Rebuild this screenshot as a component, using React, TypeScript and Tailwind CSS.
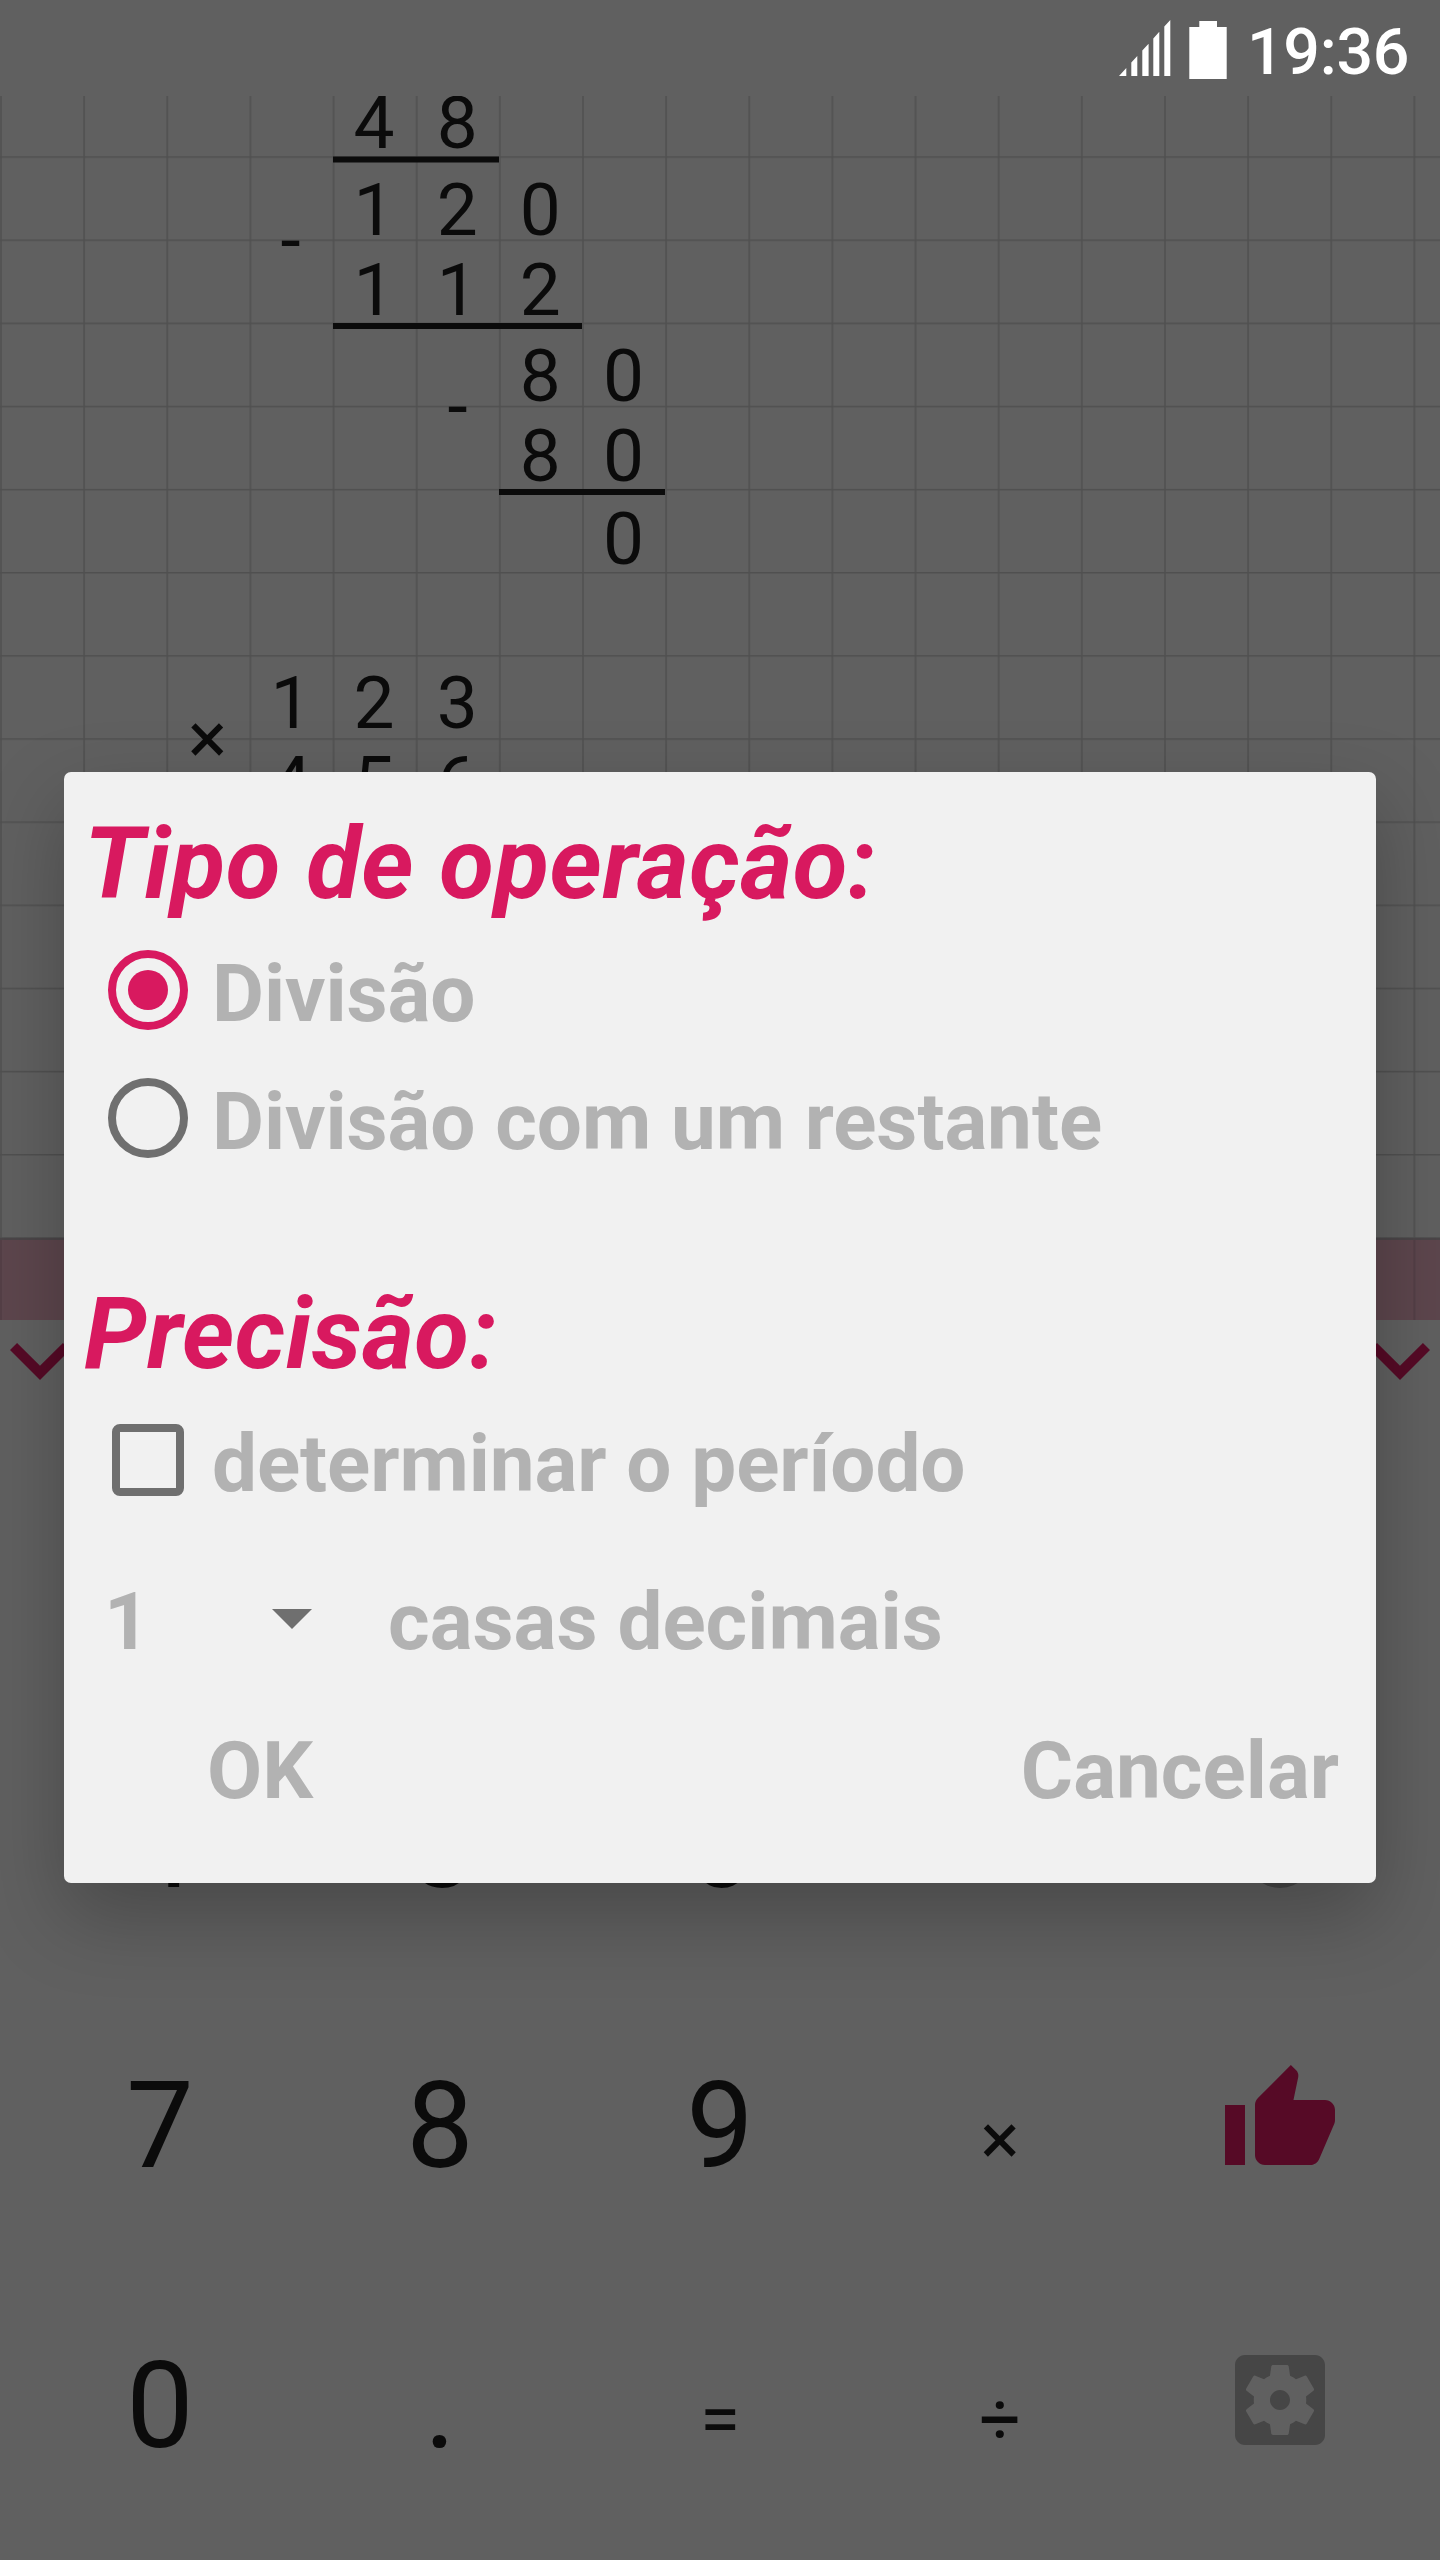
import React from 'react';

// Worksheet cells are 83.14px squares, the first row is cut off by the status bar
type Row = {
  /** Height of the row and its distance from the row above */
  className: string;
  /** One entry per grid column, starting at the left edge */
  cells: string[];
};

const rows: Row[] = [
  { className: 'h-[80px]', cells: ['', '', '', '', '4', '8'] },
  { className: 'mt-[7px] h-[80px]', cells: ['', '', '', '', '1', '2', '0'] },
  { className: 'h-[80px]', cells: ['', '', '', '', '1', '1', '2'] },
  { className: 'mt-[6px] h-[80px]', cells: ['', '', '', '', '', '', '8', '0'] },
  { className: 'h-[80px]', cells: ['', '', '', '', '', '', '8', '0'] },
  { className: 'mt-[3px] h-[80px]', cells: ['', '', '', '', '', '', '', '0'] },
  { className: 'mt-[84px] h-[80px]', cells: ['', '', '', '1', '2', '3'] },
  { className: 'h-[80px]', cells: ['', '', '', '4', '5', '6'] },
];

const keys = [
  ['4', '5', '6', '-', 'back'],
  ['7', '8', '9', '×', 'like'],
  ['0', '.', '=', '÷', 'settings'],
];

/** Status bar with signal, battery and clock */
const StatusBar = () => (
  <header className="flex h-24 shrink-0 items-center justify-end pr-[34px] pt-[4px] text-white">
    <svg className="-mt-[4px] mr-[18px] h-[56px] w-[52px]" viewBox="0 0 52 56" fill="currentColor" aria-hidden="true">
      <path d="M0 56 7.3 48V56zM12.3 56V42.5L18.3 36V56zM23.3 56V30.5L29.6 23.7V56zM34.3 56V18.4L40.3 11.8V56zM45.3 56V6.4L51.3 0V56z" />
    </svg>
    <svg className="mr-[20px] h-[58px] w-[38px]" viewBox="0 0 38 58" fill="currentColor" aria-hidden="true">
      <path d="M.3 6h10V0h17.7v6h9.7v52H.3z" />
    </svg>
    <span className="mt-[5px] w-[159px] text-[64.5px] font-medium leading-none tracking-[-0.3px]">19:36</span>
  </header>
);

/** Squared paper with the written calculation */
const Worksheet = () => (
  <section className="relative h-[1142px] shrink-0 overflow-hidden">
    <svg className="absolute inset-0 h-full w-full" aria-hidden="true">
      <defs>
        <pattern id="grid" width="83.14" height="83.14" y="60.3" patternUnits="userSpaceOnUse">
          <path d="M0 .8H83.14M1 0V83.14" stroke="#505050" strokeWidth="1.6" fill="none" />
        </pattern>
      </defs>
      <rect width="1440" height="1144" fill="url(#grid)" />
      <path d="M333 63.5h166M333 230h249M499 396h166" stroke="#0b0b0b" strokeWidth="6" />
    </svg>

    <div className="relative -mt-[13px]">
      {rows.map((row, i) => (
        <div key={i} className={`flex ${row.className}`}>
          {row.cells.map((cell, j) => (
            <span key={j} className="w-[83.14px] shrink-0 text-center text-[73px] leading-[80px]">
              {cell}
            </span>
          ))}
        </div>
      ))}
    </div>

    {/* Operators sit between two rows of digits */}
    <span className="absolute left-[249px] top-[104px] w-[83px] text-center text-[73px] leading-[80px]">-</span>
    <span className="absolute left-[416px] top-[270px] w-[83px] text-center text-[73px] leading-[80px]">-</span>
    <span className="absolute left-[166px] top-[602px] w-[83px] text-center text-[73px] leading-[80px]">×</span>
  </section>
);

/** Current input line, the paper grid shines through */
const InputLine = () => (
  <div className="h-[82px] shrink-0 border-t-2 border-[#4b4548] bg-[#5d464d]">
    <svg className="h-full w-full" aria-hidden="true">
      <path d="M1 0v82M1414.4 0v82" stroke="#543f46" strokeWidth="2" />
    </svg>
  </div>
);

const Chevron = () => (
  <svg className="h-[120px] w-[120px] text-[#560a26]" viewBox="0 0 24 24" fill="currentColor" aria-hidden="true">
    <path d="M16.59 8.59 12 13.17 7.41 8.59 6 10l6 6 6-6z" />
  </svg>
);

const KeyIcon = ({ name }: { name: string }) => {
  if (name === 'back') {
    return (
      <svg className="h-[120px] w-[120px] text-[#464646]" viewBox="0 0 24 24" fill="currentColor" aria-hidden="true">
        <circle cx="12" cy="14.6" r="7" />
      </svg>
    );
  }
  if (name === 'like') {
    return (
      <svg className="h-[120px] w-[120px] text-[#560a26]" viewBox="0 0 24 24" fill="currentColor" aria-hidden="true">
        <path d="M1 21h4V9H1v12zm22-11c0-1.1-.9-2-2-2h-6.31l.95-4.57.03-.32c0-.41-.17-.79-.44-1.06L14.17 1 7.59 7.59C7.22 7.95 7 8.45 7 9v10c0 1.1.9 2 2 2h9c.83 0 1.54-.5 1.84-1.22l3.02-7.05c.09-.23.14-.47.14-.73v-2z" />
      </svg>
    );
  }
  return (
    <svg className="h-[120px] w-[120px] text-[#464646]" viewBox="0 0 24 24" fill="currentColor" aria-hidden="true">
      <path d="M12 10c-1.1 0-2 .9-2 2s.9 2 2 2 2-.9 2-2-.9-2-2-2zm7-7H5c-1.11 0-2 .9-2 2v14c0 1.1.89 2 2 2h14c1.11 0 2-.9 2-2V5c0-1.1-.89-2-2-2zm-1.75 9c0 .23-.02.46-.05.68l1.48 1.16c.13.11.17.3.08.45l-1.4 2.42c-.09.15-.27.21-.43.15l-1.74-.7c-.36.28-.76.51-1.18.69l-.26 1.85c-.03.17-.18.3-.35.3h-2.8c-.17 0-.32-.13-.35-.29l-.26-1.85c-.43-.18-.82-.41-1.18-.69l-1.74.7c-.16.06-.34 0-.43-.15l-1.4-2.42c-.09-.15-.05-.34.08-.45l1.48-1.16c-.03-.23-.05-.46-.05-.69 0-.23.02-.46.05-.68l-1.48-1.16c-.13-.11-.17-.3-.08-.45l1.4-2.42c.09-.15.27-.21.43-.15l1.74.7c.36-.28.76-.51 1.18-.69l.26-1.85c.03-.17.18-.3.35-.3h2.8c.17 0 .32.13.35.29l.26 1.85c.43.18.82.41 1.18.69l1.74-.7c.16-.06.34 0 .43.15l1.4 2.42c.09.15.05.34-.08.45l-1.48 1.16c.03.23.05.46.05.69z" />
    </svg>
  );
};

/** Calculator keys, three digit columns, operators and actions */
const Keypad = () => (
  <section className="mt-[280px] grid grid-cols-5 px-[20px]">
    {keys.flat().map((key) => (
      <div key={key} className="flex h-[280px] items-center justify-center">
        {key.length > 1 ? (
          <KeyIcon name={key} />
        ) : (
          <span
            className={
              /[0-9.]/.test(key)
                ? 'mt-[12px] text-[120px] leading-none'
                : 'mt-[38px] text-[73px] leading-none'
            }
          >
            {key}
          </span>
        )}
      </div>
    ))}
  </section>
);

const Radio = ({ checked, label }: { checked?: boolean; label: string }) => (
  <label className="ml-[44px] flex h-[128px] items-center">
    <span
      className={`flex h-[80px] w-[80px] shrink-0 items-center justify-center rounded-full border-8 ${
        checked ? 'border-[#d8195f]' : 'border-[#6f6f6f]'
      }`}
    >
      {checked && <span className="h-[40px] w-[40px] rounded-full bg-[#d8195f]" />}
    </span>
    <span className="ml-[24px] mt-[7px] leading-none tracking-[-0.07px]">{label}</span>
  </label>
);

/** Options for the division */
const OperationDialog = () => (
  <div
    role="dialog"
    className="absolute left-[64px] top-[772px] flex h-[1111px] w-[1312px] flex-col rounded-[7px] bg-[#f1f1f1] text-[80px] font-bold text-[#b2b2b2] shadow-[0_32px_80px_rgba(0,0,0,0.25)]"
  >
    <h2 className="ml-[20px] mt-[40px] h-[114px] text-[100px] italic leading-[104px] tracking-[0.5px] text-[#d8195f]">
      Tipo de operação:
    </h2>
    <Radio checked label="Divisão" />
    <Radio label="Divisão com um restante" />

    <h2 className="ml-[20px] mt-[100px] h-[114px] text-[100px] italic leading-[104px] tracking-[0.4px] text-[#d8195f]">
      Precisão:
    </h2>
    <label className="ml-[48px] flex h-[128px] items-center">
      <span className="h-[72px] w-[72px] shrink-0 rounded-[8px] border-8 border-[#6f6f6f]" />
      <span className="ml-[28px] mt-[7px] leading-none tracking-[-0.07px]">determinar o período</span>
    </label>

    <div className="mt-[18px] flex h-[160px] items-center">
      <span className="ml-[40px] w-[168px] leading-none">1</span>
      <svg className="mb-[6px] h-[20px] w-[40px] text-[#6f6f6f]" viewBox="0 0 40 20" fill="currentColor" aria-hidden="true">
        <path d="M0 0h40L20 20z" />
      </svg>
      <span className="ml-[76px] leading-none">casas decimais</span>
    </div>

    <div className="flex h-[138px] items-center justify-between pl-[143px] pr-[37px]">
      <button className="leading-none">OK</button>
      <button className="leading-none">Cancelar</button>
    </div>
  </div>
);

export default function App() {
  return (
    <main className="relative flex h-[2560px] w-[1440px] flex-col overflow-hidden bg-[#606060] font-['Roboto',sans-serif] text-[#0b0b0b]">
      <StatusBar />
      <Worksheet />
      <InputLine />

      {/* Scroll handles of the keypad */}
      <div className="relative h-[100px] shrink-0">
        <div className="absolute -left-[20px] -top-[20px]">
          <Chevron />
        </div>
        <div className="absolute -right-[20px] -top-[20px]">
          <Chevron />
        </div>
      </div>
      <Keypad />

      <OperationDialog />
    </main>
  );
}
